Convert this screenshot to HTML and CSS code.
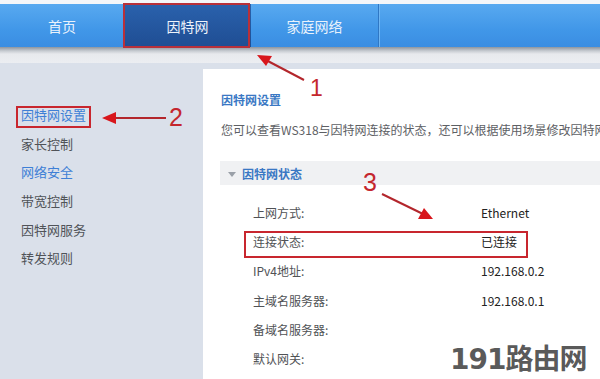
FILE: index.html
```html
<!DOCTYPE html>
<html lang="zh-CN">
<head>
<meta charset="utf-8">
<link rel="stylesheet" href="styles.css">
</head>
<body>
<div class="page">
  <div class="topgap"></div>
  <nav class="nav">
    <div class="nav-item">首页</div>
    <div class="nav-item active">因特网</div>
    <div class="nav-item">家庭网络</div>
    <div class="nav-rest"></div>
  </nav>
  <div class="shade"></div>
  <div class="main">
    <aside class="side">
      <div class="side-item blue">因特网设置</div>
      <div class="side-item">家长控制</div>
      <div class="side-item blue">网络安全</div>
      <div class="side-item">带宽控制</div>
      <div class="side-item">因特网服务</div>
      <div class="side-item">转发规则</div>
    </aside>
    <section class="panel">
      <h1 class="title">因特网设置</h1>
      <p class="desc">您可以查看WS318与因特网连接的状态，还可以根据使用场景修改因特网的</p>
      <div class="sec-head"><span class="caret"></span>因特网状态</div>
      <div class="rows">
        <div class="row"><span class="lbl">上网方式:</span><span class="val">Ethernet</span></div>
        <div class="row"><span class="lbl">连接状态:</span><span class="val">已连接</span></div>
        <div class="row"><span class="lbl">IPv4地址:</span><span class="val">192.168.0.2</span></div>
        <div class="row"><span class="lbl">主域名服务器:</span><span class="val">192.168.0.1</span></div>
        <div class="row"><span class="lbl">备域名服务器:</span><span class="val"></span></div>
        <div class="row"><span class="lbl">默认网关:</span><span class="val"></span></div>
      </div>
    </section>
  </div>

  <div class="box box-tab"></div>
  <div class="box box-side"></div>
  <div class="box box-row"></div>
  <svg class="arrows" width="600" height="379" viewBox="0 0 600 379">
    <g stroke="#b3262c" stroke-width="2" fill="none">
      <line x1="304" y1="80" x2="264" y2="59"/>
      <line x1="166" y1="118" x2="112" y2="118"/>
      <line x1="382" y1="194" x2="423" y2="214"/>
    </g>
    <g fill="#d8161c">
      <polygon points="257,55 272,56 266,66"/>
      <polygon points="102,118 116,112 116,124"/>
      <polygon points="433,219 418,219 424,208"/>
    </g>
  </svg>
  <span class="num n1">1</span>
  <span class="num n2">2</span>
  <span class="num n3">3</span>
  <div class="wm">
    <span class="wm-text">191路由网</span>
  </div>
</div>
</body>
</html>
```
FILE: styles.css
```css
* { box-sizing: border-box; }
html, body { margin: 0; padding: 0; }
body {
  width: 600px;
  height: 379px;
  overflow: hidden;
  background: #ffffff;
  font-family: "Microsoft YaHei", "Noto Sans CJK SC", "Liberation Sans", sans-serif;
}
.page {
  position: relative;
  width: 600px;
  height: 379px;
  overflow: hidden;
  display: flex;
  flex-direction: column;
}
.topgap { height: 4px; background: #f4f6f9; flex: none; }
.nav {
  height: 43px;
  flex: none;
  display: flex;
  background: linear-gradient(#58a9f0, #4197e8 60%, #3a8de2);
}
.nav-item {
  width: 125px;
  height: 43px;
  display: flex;
  align-items: center;
  justify-content: center;
  color: #e9f2fc;
  font-size: 14px;
  border-right: 1px solid transparent;
}
.nav-item:nth-child(3) { width: 128px; border-right: 1px solid #2f77c4; }
.nav-item.active {
  width: 126px;
  background: linear-gradient(#2a62ad, #1f4d93);
  color: #eef3fa;
}
.nav-rest { flex: 1; border-left: 1px solid #6fb6f3; }
.shade {
  height: 16px;
  flex: none;
  background: linear-gradient(#8d959f, #c8ccd2 4px, #e7e9ed 7px, #eceef2 16px);
}
.main {
  flex: 1;
  display: flex;
  background: #dae0ea;
  padding-top: 6px;
}
.side {
  width: 203px;
  flex: none;
  padding-top: 32px;
  padding-left: 21px;
}
.side-item {
  height: 28.7px;
  line-height: 28.7px;
  font-size: 13px;
  color: #505358;
}
.side-item.blue { color: #3e7fd6; }
.panel {
  flex: 1;
  background: #ffffff;
  padding: 23px 0 0 17px;
  overflow: hidden;
}
.title {
  margin: 0 0 0 1px;
  font-size: 12px;
  line-height: 16px;
  font-weight: bold;
  color: #3a78c4;
}
.desc {
  margin: 14px 0 0 1px;
  font-size: 12px;
  line-height: 16px;
  color: #5d6064;
  white-space: nowrap;
}
.sec-head {
  margin-top: 23px;
  height: 24px;
  background: #f0f1f3;
  display: flex;
  align-items: center;
  font-size: 12px;
  font-weight: bold;
  color: #3a78c4;
  padding-left: 8px;
}
.caret {
  width: 0; height: 0;
  border-left: 4px solid transparent;
  border-right: 4px solid transparent;
  border-top: 5px solid #9aa0a8;
  margin-right: 6px;
  margin-top: 2px;
}
.rows { margin-top: 13px; padding-left: 33px; }
.row {
  display: flex;
  height: 29.2px;
  line-height: 29.2px;
  font-size: 12px;
  color: #505255;
}
.lbl { width: 228px; }
.val { color: #222; }
.box {
  position: absolute;
  border: 2px solid #c8262e;
}
.box-tab { left: 123px; top: 3px; width: 127px; height: 45px; border-color: #b8303a; }
.box-side { left: 16px; top: 106px; width: 75px; height: 22px; }
.box-row { left: 244px; top: 231px; width: 284px; height: 27px; }
.arrows { position: absolute; left: 0; top: 0; }
.num {
  position: absolute;
  color: #c4262d;
  font-family: "Liberation Sans", sans-serif;
  font-size: 25px;
  line-height: 1;
}
.n1 { left: 310px; top: 77px; font-size: 23px; }
.n2 { left: 169px; top: 105px; }
.n3 { left: 363px; top: 170px; }
.wm {
  position: absolute;
  left: 450px;
  top: 343px;
  width: 150px;
  height: 36px;
}
.wm-text {
  display: block;
  font-size: 28px;
  line-height: 34px;
  font-weight: bold;
  color: rgba(60, 60, 60, 0.85);
  font-family: "DejaVu Sans", "Noto Sans CJK SC", sans-serif;
  white-space: nowrap;
  letter-spacing: -1px;
}
```
